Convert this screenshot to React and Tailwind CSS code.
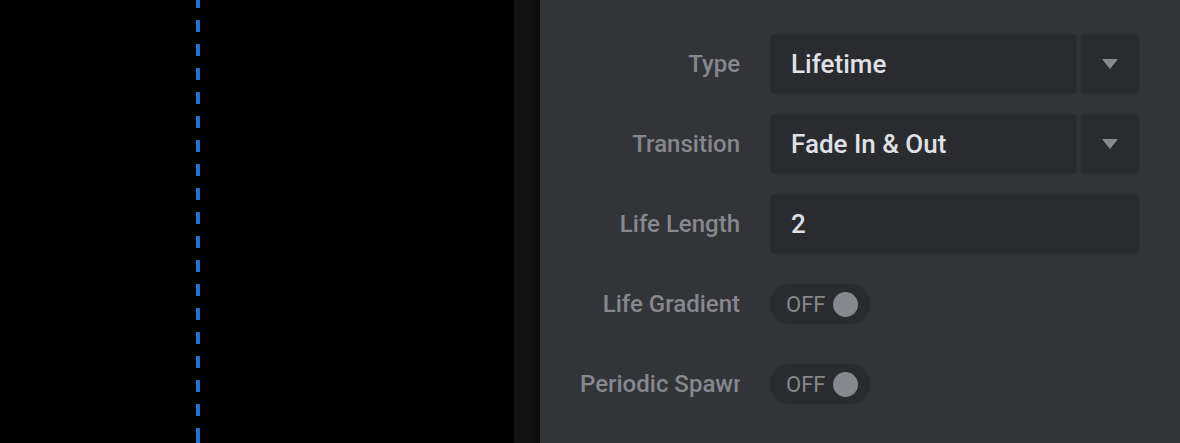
import React from 'react';

// Linha de seleção com seta à direita
const SelectRow = ({ label, value }) => (
  <div className="flex h-[60px] items-center gap-[30px]">
    <div className="w-[160px] shrink-0 overflow-hidden whitespace-nowrap text-right text-[24px] font-medium text-[#86888d]">
      {label}
    </div>
    <div className="flex h-[60px] w-[370px] gap-[3px]">
      <div className="flex flex-1 items-center rounded-[4px] border border-[#2e2f33] bg-[#2a2b2f] px-5 text-[26px] font-medium text-[#dfe1e6]">
        {value}
      </div>
      <div className="flex w-[60px] items-center justify-center rounded-[4px] border border-[#2e2f33] bg-[#2a2b2f]">
        <svg width="16" height="10" viewBox="0 0 16 10">
          <path d="M0 0 L16 0 L8 10 Z" fill="#8a8b90" />
        </svg>
      </div>
    </div>
  </div>
);

const InputRow = ({ label, value }) => (
  <div className="flex h-[60px] items-center gap-[30px]">
    <div className="w-[160px] shrink-0 overflow-hidden whitespace-nowrap text-right text-[24px] font-medium text-[#86888d]">
      {label}
    </div>
    <div className="flex h-[60px] w-[370px] items-center rounded-[4px] border border-[#2e2f33] bg-[#2a2b2f] px-5 text-[26px] font-medium text-[#dfe1e6]">
      {value}
    </div>
  </div>
);

const ToggleRow = ({ label }) => (
  <div className="flex h-[60px] items-center gap-[30px]">
    <div className="w-[160px] shrink-0 overflow-hidden whitespace-nowrap text-right text-[24px] font-medium text-[#86888d]">
      {label}
    </div>
    <div className="flex h-[40px] w-[100px] items-center justify-between rounded-full bg-[#2a2b2f] pl-4 pr-3 text-[22px] text-[#86888d]">
      <span>OFF</span>
      <span className="h-[25px] w-[25px] rounded-full bg-[#86888d]" />
    </div>
  </div>
);

export default function App() {
  return (
    <div className="flex h-[443px] w-[1180px] overflow-hidden font-['Roboto',sans-serif]">
      {/* Área do viewport com a linha tracejada */}
      <div className="w-[514px] shrink-0 bg-black">
        <div className="ml-[196px] h-full w-[4px] bg-[repeating-linear-gradient(to_bottom,#1c74d4_0px,#1c74d4_12px,transparent_12px,transparent_24px)] bg-[position:0_-4px]" />
      </div>
      <div className="w-[26px] shrink-0 bg-[linear-gradient(to_right,#141414,#121212_60%,#0b0b0b)]" />

      {/* Painel de propriedades */}
      <div className="flex flex-1 flex-col gap-5 bg-[#333438] px-10 pt-[34px]">
        <SelectRow label="Type" value="Lifetime" />
        <SelectRow label="Transition" value="Fade In & Out" />
        <InputRow label="Life Length" value="2" />
        <ToggleRow label="Life Gradient" />
        <ToggleRow label="Periodic Spawn" />
      </div>
    </div>
  );
}
